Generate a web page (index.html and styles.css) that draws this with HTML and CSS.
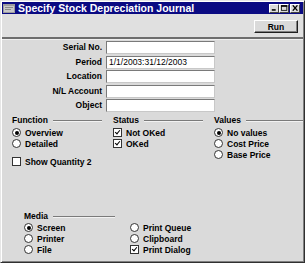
FILE: index.html
```html
<!doctype html>
<html lang="en">
<head>
    <meta charset="utf-8">
    <title>Specify Stock Depreciation Journal</title>
    <link rel="stylesheet" href="styles.css">
</head>
<body>
  <div class="window">
    <div class="titlebar">
      <svg class="app-icon" width="12" height="9" viewBox="0 0 12 9">
        <rect x="0" y="0" width="12" height="9" fill="#9c9c9c"/>
        <rect x="1" y="2" width="10" height="6" fill="#c8c8c8"/>
        <rect x="2" y="3" width="8" height="1" fill="#8a8a8a"/>
        <rect x="2" y="5" width="6" height="1" fill="#8a8a8a"/>
      </svg>
      <span class="title">Specify Stock Depreciation Journal</span>
      <div class="caption-buttons">
        <span class="cap-btn"><svg width="9" height="7" viewBox="0 0 9 7"><rect x="1" y="5" width="5" height="2" fill="#000"/></svg></span>
        <span class="cap-btn"><svg width="9" height="7" viewBox="0 0 9 7"><rect x="0.5" y="0.5" width="7" height="6" fill="none" stroke="#000"/><rect x="0" y="0" width="8" height="2" fill="#000"/></svg></span>
        <span class="cap-btn close"><svg width="9" height="7" viewBox="0 0 9 7"><path d="M1 0 L7 7 M7 0 L1 7" stroke="#000" stroke-width="1.6"/></svg></span>
      </div>
    </div>

    <div class="toolbar">
      <button class="run">Run</button>
    </div>
    <div class="separator"></div>

    <div class="form">
      <div class="fields">
        <label>Serial No.</label><div class="input"></div>
        <label>Period</label><div class="input">1/1/2003:31/12/2003</div>
        <label>Location</label><div class="input"></div>
        <label>N/L Account</label><div class="input"></div>
        <label>Object</label><div class="input"></div>
      </div>

      <div class="groups">
        <div class="group">
          <div class="heading"><span>Function</span><i></i></div>
          <div class="option"><span class="radio on"></span>Overview</div>
          <div class="option"><span class="radio"></span>Detailed</div>
          <div class="option extra"><span class="check"></span>Show Quantity 2</div>
        </div>
        <div class="group">
          <div class="heading"><span>Status</span><i></i></div>
          <div class="option"><span class="check on"></span>Not OKed</div>
          <div class="option"><span class="check on"></span>OKed</div>
        </div>
        <div class="group last">
          <div class="heading"><span>Values</span><i></i></div>
          <div class="option"><span class="radio on"></span>No values</div>
          <div class="option"><span class="radio"></span>Cost Price</div>
          <div class="option"><span class="radio"></span>Base Price</div>
        </div>
      </div>

      <div class="media">
        <div class="heading"><span>Media</span><i></i></div>
        <div class="media-cols">
          <div class="media-col">
            <div class="option"><span class="radio on"></span>Screen</div>
            <div class="option"><span class="radio"></span>Printer</div>
            <div class="option"><span class="radio"></span>File</div>
          </div>
          <div class="media-col">
            <div class="option"><span class="radio"></span>Print Queue</div>
            <div class="option"><span class="radio"></span>Clipboard</div>
            <div class="option"><span class="check on"></span>Print Dialog</div>
          </div>
        </div>
      </div>
    </div>
  </div>
</body>
</html>
```

FILE: styles.css
```css
:root {
  --face: #dadada;
  --shadow: #808080;
  --font: "Liberation Sans", Arial, sans-serif;
}

body {
  margin: 0;
  font-family: var(--font);
  font-size: 8.5px;
  font-weight: bold;
  color: #000;
}

.window {
  width: 305px;
  height: 263px;
  box-sizing: border-box;
  background: var(--face);
  border: 1px solid;
  border-color: #e6e6e6 #303030 #303030 #e6e6e6;
  box-shadow: inset 1px 1px #fff, inset -1px -1px var(--shadow);
  padding: 1px;
  display: flex;
  flex-direction: column;
}

/* title bar */
.titlebar {
  height: 12px;
  background: #0a0a82;
  display: flex;
  align-items: center;
  padding-left: 1px;
}

.app-icon {
  margin-right: 3px;
}

.title {
  color: #fff;
  font-size: 10.5px;
  line-height: 12px;
  flex: 1;
}

.caption-buttons {
  display: flex;
  margin-right: 3px;
}

.cap-btn {
  width: 10px;
  height: 9px;
  box-sizing: border-box;
  background: var(--face);
  border: 1px solid;
  border-color: #fff #404040 #404040 #fff;
  display: flex;
  align-items: center;
  justify-content: center;
}

.cap-btn svg {
  width: 7px;
  height: 6px;
}

.cap-btn.close {
  margin-left: 1px;
}

/* toolbar */
.toolbar {
  height: 23px;
  box-sizing: border-box;
  display: flex;
  justify-content: flex-end;
  padding: 6px 5px 0 0;
  background: #e0e0e0;
}

.run {
  width: 44px;
  height: 13px;
  padding: 0;
  font-family: var(--font);
  font-size: 8.5px;
  font-weight: bold;
  background: var(--face);
  border: 1px solid;
  border-color: #fff #202020 #202020 #fff;
  box-shadow: inset -1px -1px var(--shadow);
}

.separator {
  height: 2px;
  background: #6e6e6e;
  border-bottom: 1px solid #f0f0f0;
}

/* form */
.form {
  flex: 1;
  padding-top: 1px;
}

.fields {
  display: grid;
  grid-template-columns: 100px 109px;
  grid-auto-rows: 13px;
  column-gap: 4px;
  row-gap: 1.5px;
}

.fields label {
  text-align: right;
  line-height: 13px;
}

.input {
  background: #fff;
  border: 1px solid;
  border-color: #7a7a7a #c8c8c8 #c8c8c8 #7a7a7a;
  box-sizing: border-box;
  font-weight: normal;
  line-height: 11px;
  padding-left: 2px;
}

.groups {
  display: flex;
  margin-top: 2px;
  padding-left: 10px;
}

.group {
  width: 90px;
  margin-right: 11px;
}

.group.last {
  width: 89px;
  margin-right: 0;
}

.heading {
  display: flex;
  align-items: center;
  height: 11px;
  margin-bottom: 2px;
}

.heading i {
  flex: 1;
  height: 1px;
  margin: 3px 0 0 5px;
  background: #7a7a7a;
  border-bottom: 1px solid #f2f2f2;
}

.option {
  display: flex;
  align-items: center;
  height: 11px;
}

.option.extra {
  margin-top: 7px;
}

.radio,
.check {
  width: 9px;
  height: 9px;
  box-sizing: border-box;
  margin-right: 4px;
  background: #fff;
  border: 1px solid #333;
  flex: none;
}

.radio {
  border-radius: 50%;
  display: flex;
  align-items: center;
  justify-content: center;
}

.radio.on::after {
  content: "";
  width: 4px;
  height: 4px;
  border-radius: 50%;
  background: #000;
}

.check {
  position: relative;
}

.check.on::after {
  content: "";
  position: absolute;
  left: 1.5px;
  top: 0;
  width: 2px;
  height: 4px;
  border: solid #000;
  border-width: 0 1.6px 1.6px 0;
  transform: rotate(40deg);
}

.media {
  margin-top: 43px;
  padding-left: 22px;
}

.media .heading {
  width: 91px;
  margin-bottom: 1px;
}

.media-cols {
  display: flex;
}

.media-col {
  width: 106px;
}
```
